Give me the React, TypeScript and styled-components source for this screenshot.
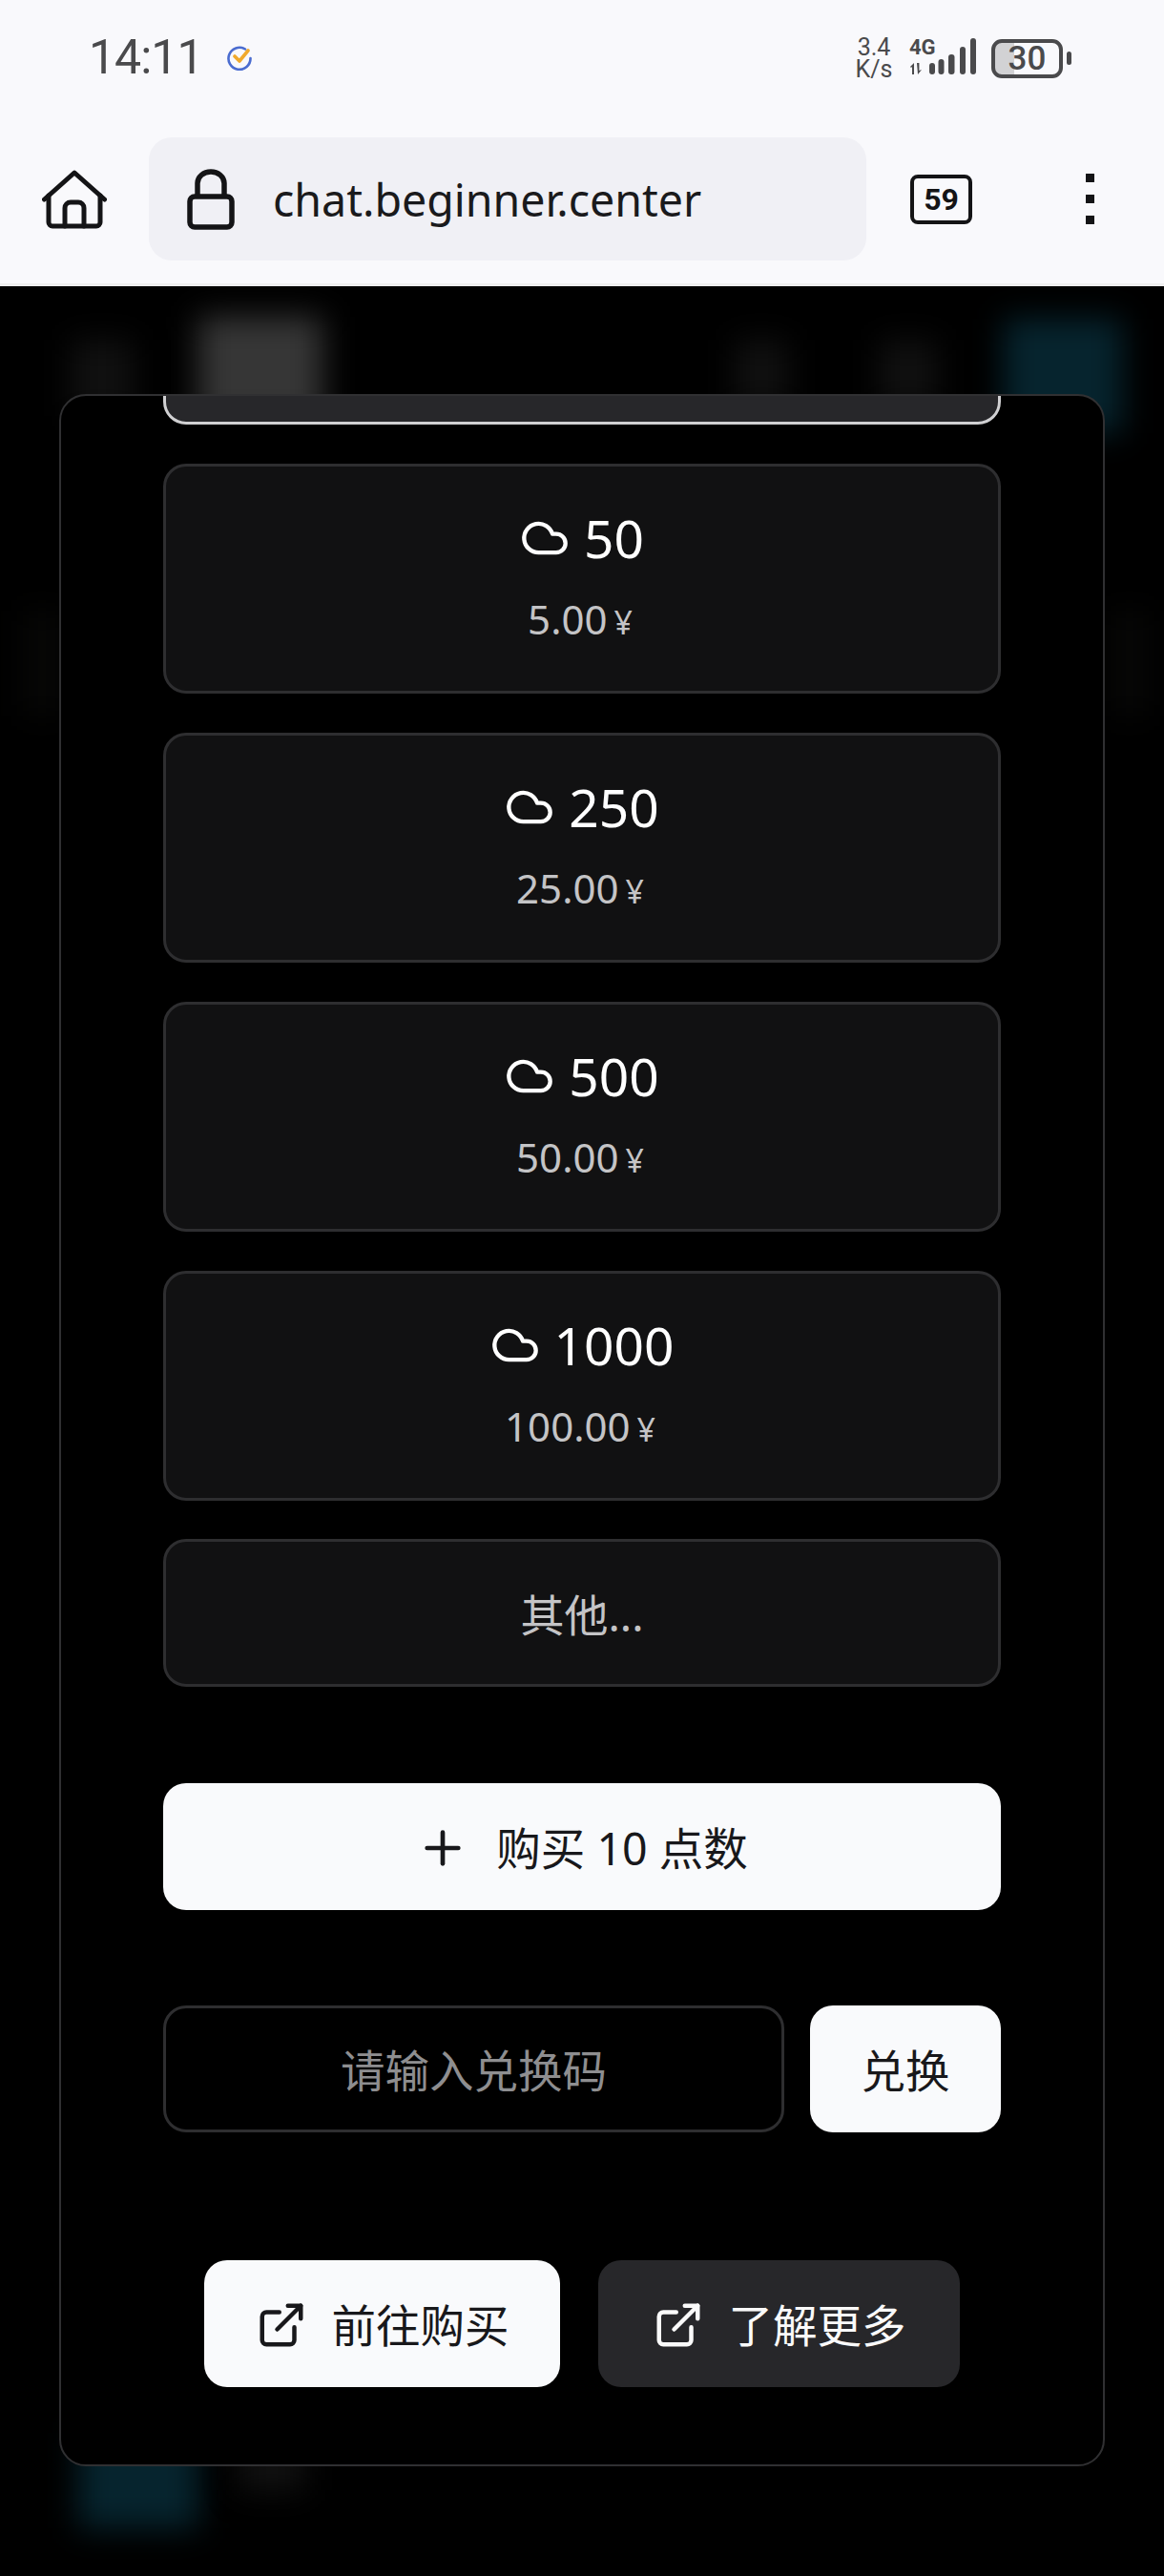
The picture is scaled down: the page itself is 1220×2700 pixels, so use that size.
import React from "react";
import styled, { createGlobalStyle } from "styled-components";
import { Cloud, ExternalLink, Plus } from "lucide-react";

const cjk = `"Noto Sans", "Noto Sans CJK SC", sans-serif`;

const GlobalStyle = createGlobalStyle`
  html, body {
    margin: 0;
    padding: 0;
    background: #000;
  }
  * {
    box-sizing: border-box;
  }
`;

const Page = styled.div`
  width: 1220px;
  height: 2700px;
  display: flex;
  flex-direction: column;
  overflow: hidden;
  font-family: ${cjk};
`;

// Browser chrome
const Chrome = styled.header`
  height: 300px;
  flex: none;
  background: #f9f9fc;
  border-bottom: 3px solid #eeeeef;
`;

const StatusBar = styled.div`
  height: 144px;
  padding: 36px 97px 0 93px;
  display: flex;
  justify-content: space-between;
  align-items: flex-start;
  color: #4a4a4c;
`;

const StatusLeft = styled.div`
  display: flex;
  align-items: center;
  gap: 24px;
`;

const Clock = styled.span`
  font-family: "Roboto", sans-serif;
  font-size: 50px;
  line-height: 48px;
  letter-spacing: -1px;
`;

const StatusRight = styled.div`
  display: flex;
  align-items: center;
  margin-top: 2px;
`;

const Speed = styled.div`
  width: 40px;
  font-family: "Roboto", sans-serif;
  font-size: 25px;
  line-height: 23px;
  text-align: center;
`;

const Network = styled.div`
  margin-left: 17px;
  position: relative;
  width: 72px;
  height: 44px;
`;

const NetworkLabel = styled.span`
  position: absolute;
  left: 0;
  top: -1px;
  font-family: "Roboto", sans-serif;
  font-size: 22px;
  line-height: 24px;
  font-weight: 700;
`;

const Battery = styled.div`
  margin-left: 14px;
  width: 75px;
  height: 41px;
  border: 4px solid #4a4a4c;
  border-radius: 11px;
  background: linear-gradient(90deg, #d2d2d4 0 20px, transparent 20px);
  display: flex;
  align-items: center;
  justify-content: center;
  font-family: "Roboto", sans-serif;
  font-size: 35px;
  font-weight: 500;
  line-height: 33px;
`;

const BatteryNub = styled.div`
  margin-left: 4px;
  width: 5px;
  height: 14px;
  border-radius: 3px;
  background: #4a4a4c;
`;

const Toolbar = styled.div`
  height: 129px;
  display: flex;
  align-items: center;
  color: #141416;
`;

const ToolIcon = styled.svg`
  display: block;
  flex: none;
`;

const HomeSlot = styled.div`
  width: 156px;
  padding-left: 44px;
  flex: none;
`;

const AddressBar = styled.div`
  width: 752px;
  height: 129px;
  flex: none;
  padding-left: 40px;
  display: flex;
  align-items: center;
  gap: 40px;
  background: #f0f0f5;
  border-radius: 24px;
`;

const Url = styled.span`
  font-size: 46.5px;
  line-height: 60px;
  color: #1a1a1c;
  margin-top: 1px;
`;

const TabCount = styled.div`
  margin-left: 46px;
  width: 65px;
  height: 52px;
  flex: none;
  border: 4px solid #141416;
  border-radius: 8px;
  display: flex;
  align-items: center;
  justify-content: center;
  font-family: "Roboto", sans-serif;
  font-size: 32px;
  font-weight: 700;
`;

const Dots = styled.div`
  margin-left: 119px;
  display: flex;
  flex-direction: column;
  gap: 13px;
`;

const Dot = styled.span`
  display: block;
  width: 9px;
  height: 9px;
  background: #141416;
`;

// Dimmed page behind the dialog
const Viewport = styled.main`
  position: relative;
  flex: 1;
  background: #000;
  padding: 113px 62px 0;
  overflow: hidden;
`;

const Blob = styled.div<{ $x: number; $y: number; $w: number; $h: number; $c: string }>`
  position: absolute;
  left: ${(p) => p.$x}px;
  top: ${(p) => p.$y}px;
  width: ${(p) => p.$w}px;
  height: ${(p) => p.$h}px;
  background: ${(p) => p.$c};
  filter: blur(16px);
`;

const Dialog = styled.section`
  position: relative;
  width: 1096px;
  height: 2172px;
  background: #000;
  border: 2px solid #303032;
  border-radius: 28px;
  padding: 0 107px;
  overflow: hidden;
`;

const PlanList = styled.div`
  margin-top: -211px;
  display: flex;
  flex-direction: column;
  gap: 41px;
`;

const Plan = styled.div<{ $selected?: boolean }>`
  height: 241px;
  display: flex;
  flex-direction: column;
  align-items: center;
  background: ${(p) => (p.$selected ? "#27272a" : "#111112")};
  border: ${(p) => (p.$selected ? "3px solid #d0d0d2" : "3px solid #2e2e30")};
  border-radius: 24px;
  padding-top: 40px;
`;

const PlanTitle = styled.div`
  display: flex;
  align-items: center;
  gap: 15px;
  height: 70px;
  color: #fff;
  font-size: 55px;
  line-height: 70px;
`;

const PlanPrice = styled.div`
  margin: 22px 4px 0 0;
  display: flex;
  align-items: baseline;
  gap: 7px;
  color: #c4c4c6;
  font-size: 42px;
  line-height: 56px;
`;

const Yen = styled.span`
  font-size: 34px;
`;

const OtherPlan = styled.div`
  height: 155px;
  margin-top: -1px;
  padding-bottom: 2px;
  display: flex;
  align-items: center;
  justify-content: center;
  background: #111112;
  border: 3px solid #2e2e30;
  border-radius: 24px;
  color: #c4c4c6;
  font-size: 46px;
`;

const Button = styled.button<{ $dark?: boolean }>`
  height: 133px;
  display: flex;
  align-items: center;
  justify-content: center;
  border: none;
  border-radius: 24px;
  background: ${(p) => (p.$dark ? "#27272a" : "#f9fafc")};
  color: ${(p) => (p.$dark ? "#fafafa" : "#18181b")};
  font-family: ${cjk};
  font-size: 46.5px;
  line-height: 64px;
  padding: 2px 0 0;
`;

const BuyButton = styled(Button)`
  width: 100%;
  margin-top: 101px;
  gap: 28px;
`;

const RedeemRow = styled.div`
  margin-top: 100px;
  display: flex;
  gap: 27px;
`;

const RedeemInput = styled.input`
  width: 651px;
  height: 133px;
  background: #000;
  border: 3px solid #2e2e30;
  border-radius: 24px;
  color: #fff;
  text-align: center;
  font-family: ${cjk};
  font-size: 46.5px;
  padding: 2px 0 0;
  outline: none;

  &::placeholder {
    color: #8e8e90;
    opacity: 1;
  }
`;

const RedeemButton = styled(Button)`
  width: 200px;
`;

const LinkRow = styled.div`
  margin-top: 134px;
  display: flex;
  justify-content: center;
  gap: 40px;
`;

const LinkButton = styled(Button)<{ $w: number }>`
  width: ${(p) => p.$w}px;
  gap: 26px;
`;

const plans = [
  { points: "50", price: "5.00" },
  { points: "250", price: "25.00" },
  { points: "500", price: "50.00" },
  { points: "1000", price: "100.00" },
];

const blobs = [
  { x: 208, y: 32, w: 130, h: 110, c: "#363636" },
  { x: 74, y: 56, w: 66, h: 80, c: "#101010" },
  { x: 770, y: 56, w: 56, h: 70, c: "#101010" },
  { x: 922, y: 56, w: 60, h: 70, c: "#101010" },
  { x: 1052, y: 34, w: 124, h: 120, c: "#06242e" },
  { x: 82, y: 2250, w: 126, h: 100, c: "#06242e" },
  { x: 250, y: 2260, w: 70, h: 50, c: "#111111" },
  { x: 24, y: 340, w: 40, h: 110, c: "#070706" },
  { x: 1164, y: 340, w: 40, h: 110, c: "#070706" },
];

const App: React.FC = () => {
  return (
    <Page>
      <GlobalStyle />
      <Chrome>
        <StatusBar>
          <StatusLeft>
            <Clock>14:11</Clock>
            <svg width="28" height="28" viewBox="0 0 28 28" fill="none">
              <path d="M20 5.5A11.5 11.5 0 1 0 25.5 15" stroke="#4a6cd0" strokeWidth="2.6" strokeLinecap="round" />
              <path d="M9 13l5 5 9-11" stroke="#f0a92c" strokeWidth="3.6" strokeLinecap="round" strokeLinejoin="round" />
            </svg>
          </StatusLeft>
          <StatusRight>
            <Speed>
              3.4
              <br />
              K/s
            </Speed>
            <Network>
              <NetworkLabel>4G</NetworkLabel>
              <svg width="72" height="44" viewBox="0 0 72 44" fill="#4a4a4c">
                <rect x="21" y="27" width="6" height="12" rx="3" />
                <rect x="30.5" y="23" width="6" height="16" rx="3" />
                <rect x="41" y="18" width="6.5" height="21" rx="3" />
                <rect x="53" y="10" width="6" height="29" rx="3" />
                <rect x="64" y="1" width="6" height="38" rx="3" />
                <path d="M1 31l4-4v12H3v-8l-1 1zM8 27h2.4v8l2.6-1-4 5z" />
              </svg>
            </Network>
            <Battery>30</Battery>
            <BatteryNub />
          </StatusRight>
        </StatusBar>
        <Toolbar>
          <HomeSlot>
            <ToolIcon width="68" height="62" viewBox="0 0 68 62" fill="none" stroke="currentColor" strokeWidth="5" strokeLinejoin="round" strokeLinecap="round">
              <path d="M2.5 31L34 3l31.5 28" />
              <path d="M7 27v28a4 4 0 0 0 4 4h46a4 4 0 0 0 4-4V27" />
              <path d="M24 59V40a6 6 0 0 1 6-6h8a6 6 0 0 1 6 6v19" />
            </ToolIcon>
          </HomeSlot>
          <AddressBar>
            <ToolIcon width="50" height="64" viewBox="0 0 50 64" fill="none" stroke="currentColor" strokeWidth="5.5" strokeLinejoin="round">
              <rect x="3" y="29" width="44" height="32" rx="5" />
              <path d="M11 29V15a14 12 0 0 1 28 0v14" />
            </ToolIcon>
            <Url>chat.beginner.center</Url>
          </AddressBar>
          <TabCount>59</TabCount>
          <Dots>
            <Dot />
            <Dot />
            <Dot />
          </Dots>
        </Toolbar>
      </Chrome>

      <Viewport>
        {blobs.map((b) => (
          <Blob key={`${b.x}-${b.y}`} $x={b.x} $y={b.y} $w={b.w} $h={b.h} $c={b.c} />
        ))}
        <Dialog>
          <PlanList>
            <Plan $selected />
            {plans.map((plan) => (
              <Plan key={plan.points}>
                <PlanTitle>
                  <Cloud size={52} strokeWidth={2} />
                  {plan.points}
                </PlanTitle>
                <PlanPrice>
                  {plan.price}
                  <Yen>¥</Yen>
                </PlanPrice>
              </Plan>
            ))}
            <OtherPlan>其他...</OtherPlan>
          </PlanList>
          <BuyButton>
            <Plus size={56} strokeWidth={2} />
            购买 10 点数
          </BuyButton>
          <RedeemRow>
            <RedeemInput placeholder="请输入兑换码" />
            <RedeemButton>兑换</RedeemButton>
          </RedeemRow>
          <LinkRow>
            <LinkButton $w={373}>
              <ExternalLink size={54} strokeWidth={2} />
              前往购买
            </LinkButton>
            <LinkButton $w={379} $dark>
              <ExternalLink size={54} strokeWidth={2} />
              了解更多
            </LinkButton>
          </LinkRow>
        </Dialog>
      </Viewport>
    </Page>
  );
};

export default App;
